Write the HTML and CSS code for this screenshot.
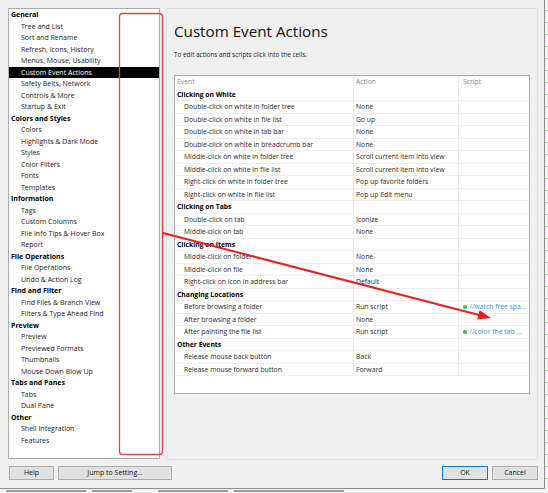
FILE: index.html
```html
<!DOCTYPE html>
<html>
<head>
<meta charset="utf-8">
<link rel="stylesheet" href="styles.css">
</head>
<body>
<div class="screen">
  <div class="top">
    <div class="window">
      <div class="main">
        <div class="tree">
          <div class="node grp">General</div>
          <div class="node">Tree and List</div>
          <div class="node">Sort and Rename</div>
          <div class="node">Refresh, Icons, History</div>
          <div class="node">Menus, Mouse, Usability</div>
          <div class="node sel">Custom Event Actions</div>
          <div class="node">Safety Belts, Network</div>
          <div class="node">Controls &amp; More</div>
          <div class="node">Startup &amp; Exit</div>
          <div class="node grp">Colors and Styles</div>
          <div class="node">Colors</div>
          <div class="node">Highlights &amp; Dark Mode</div>
          <div class="node">Styles</div>
          <div class="node">Color Filters</div>
          <div class="node">Fonts</div>
          <div class="node">Templates</div>
          <div class="node grp">Information</div>
          <div class="node">Tags</div>
          <div class="node">Custom Columns</div>
          <div class="node">File Info Tips &amp; Hover Box</div>
          <div class="node">Report</div>
          <div class="node grp">File Operations</div>
          <div class="node">File Operations</div>
          <div class="node">Undo &amp; Action Log</div>
          <div class="node grp">Find and Filter</div>
          <div class="node">Find Files &amp; Branch View</div>
          <div class="node">Filters &amp; Type Ahead Find</div>
          <div class="node grp">Preview</div>
          <div class="node">Preview</div>
          <div class="node">Previewed Formats</div>
          <div class="node">Thumbnails</div>
          <div class="node">Mouse Down Blow Up</div>
          <div class="node grp">Tabs and Panes</div>
          <div class="node">Tabs</div>
          <div class="node">Dual Pane</div>
          <div class="node grp">Other</div>
          <div class="node">Shell Integration</div>
          <div class="node">Features</div>
        </div>
        <div class="page">
          <h1 class="title">Custom Event Actions</h1>
          <p class="hint">To edit actions and scripts click into the cells.</p>
          <div class="table">
            <div class="row head"><div class="c">Event</div><div class="c">Action</div><div class="c">Script</div></div>
            <div class="row grp"><div class="c">Clicking on White</div><div class="c"></div><div class="c"></div></div>
            <div class="row"><div class="c">Double-click on white in folder tree</div><div class="c">None</div><div class="c"></div></div>
            <div class="row"><div class="c">Double-click on white in file list</div><div class="c">Go up</div><div class="c"></div></div>
            <div class="row"><div class="c">Double-click on white in tab bar</div><div class="c">None</div><div class="c"></div></div>
            <div class="row"><div class="c">Double-click on white in breadcrumb bar</div><div class="c">None</div><div class="c"></div></div>
            <div class="row"><div class="c">Middle-click on white in folder tree</div><div class="c">Scroll current item into view</div><div class="c"></div></div>
            <div class="row"><div class="c">Middle-click on white in file list</div><div class="c">Scroll current item into view</div><div class="c"></div></div>
            <div class="row"><div class="c">Right-click on white in folder tree</div><div class="c">Pop up favorite folders</div><div class="c"></div></div>
            <div class="row"><div class="c">Right-click on white in file list</div><div class="c">Pop up Edit menu</div><div class="c"></div></div>
            <div class="row grp"><div class="c">Clicking on Tabs</div><div class="c"></div><div class="c"></div></div>
            <div class="row"><div class="c">Double-click on tab</div><div class="c">Iconize</div><div class="c"></div></div>
            <div class="row"><div class="c">Middle-click on tab</div><div class="c">None</div><div class="c"></div></div>
            <div class="row grp"><div class="c">Clicking on Items</div><div class="c"></div><div class="c"></div></div>
            <div class="row"><div class="c">Middle-click on folder</div><div class="c">None</div><div class="c"></div></div>
            <div class="row"><div class="c">Middle-click on file</div><div class="c">None</div><div class="c"></div></div>
            <div class="row"><div class="c">Right-click on icon in address bar</div><div class="c">Default</div><div class="c"></div></div>
            <div class="row grp"><div class="c">Changing Locations</div><div class="c"></div><div class="c"></div></div>
            <div class="row"><div class="c">Before browsing a folder</div><div class="c">Run script</div><div class="c script"><span class="dot"></span>//watch free spa…</div></div>
            <div class="row"><div class="c">After browsing a folder</div><div class="c">None</div><div class="c"></div></div>
            <div class="row"><div class="c">After painting the file list</div><div class="c">Run script</div><div class="c script"><span class="dot"></span>//color the tab …</div></div>
            <div class="row grp"><div class="c">Other Events</div><div class="c"></div><div class="c"></div></div>
            <div class="row"><div class="c">Release mouse back button</div><div class="c">Back</div><div class="c"></div></div>
            <div class="row"><div class="c">Release mouse forward button</div><div class="c">Forward</div><div class="c"></div></div>
          </div>
        </div>
      </div>
      <div class="buttons">
        <div class="btn help">Help</div>
        <div class="btn jump">Jump to Setting...</div>
        <div class="spacer"></div>
        <div class="btn ok">OK</div>
        <div class="btn cancel">Cancel</div>
      </div>
    </div>
    <div class="edge-right"></div>
  </div>
  <div class="edge-bottom">
    <span class="mark m1"></span>
    <span class="mark m2"></span>
    <span class="mark m3"></span>
    <span class="mark m4"></span>
  </div>
  <svg class="annot" width="548" height="493" viewBox="0 0 548 493">
    <rect x="119.5" y="13.5" width="43" height="441" rx="3" ry="3" fill="none" stroke="#e8403f" stroke-width="1.3"/>
    <line x1="163" y1="233" x2="479" y2="315" stroke="#e8211f" stroke-width="2"/>
    <polygon points="491,318 477.2,319.4 479.6,310.2" fill="#e8211f"/>
  </svg>
</div>
</body>
</html>
```
FILE: styles.css
```css
* { box-sizing: border-box; }
html, body { margin: 0; padding: 0; }
body {
  width: 548px;
  height: 493px;
  overflow: hidden;
  background: #f0f0f0;
  font-family: "Open Sans", "Noto Sans", sans-serif;
  color: #1a1a1a;
}
.screen { position: relative; width: 548px; height: 493px; }
.top { display: flex; height: 489px; }
.window {
  width: 545px;
  height: 489px;
  background: #f0f0f0;
  border-right: 1px solid #8a8a8a;
  border-bottom: 1px solid #8a8a8a;
  padding: 8px 6px 0 8px;
  display: flex;
  flex-direction: column;
}
.edge-right {
  flex: 1;
  background: repeating-linear-gradient(to bottom, #f4f4f4 0 10px, #b9d4b5 10px 11px, #f4f4f4 11px 12px);
}
.main { display: flex; gap: 6px; height: 452px; }
.tree {
  width: 152px;
  height: 451px;
  background: #fff;
  border: 1px solid #acacac;
  padding-top: 0.25px;
}
.node {
  height: 11.5px;
  line-height: 11.5px;
  font-size: 7px;
  color: #1a1a1a;
  padding-left: 12px;
  white-space: nowrap;
}
.node.grp { font-weight: 700; color: #000; padding-left: 2px; }
.node.sel { background: #000; color: #fff; }
.page {
  flex: 1;
  border: 1px solid #e2e2e2;
  padding: 0 7px 0 7px;
}
.title {
  margin: 12px 0 0 0;
  font-size: 15.2px;
  font-weight: 400;
  line-height: 20px;
  color: #111;
}
.hint {
  margin: 9px 0 0 0;
  font-size: 6.4px;
  line-height: 10px;
  color: #1a1a1a;
}
.table {
  margin-top: 15px;
  width: 356px;
  height: 319px;
  background: #fff;
  border: 1px solid #a9a9a9;
}
.row {
  display: grid;
  grid-template-columns: 179px 105px 1fr;
  height: 12.5px;
}
.c {
  font-size: 6.8px;
  line-height: 11.5px;
  height: 12.5px;
  border-right: 1px solid #e9e9e9;
  border-bottom: 1px solid #eeeeee;
  padding-left: 2px;
  white-space: nowrap;
  overflow: hidden;
  color: #2a2a2a;
}
.c:first-child { padding-left: 9px; }
.c:last-child { border-right: none; padding-left: 4px; }
.row.grp .c:first-child { font-weight: 700; color: #000; padding-left: 2px; }
.row.head .c { color: #8a8a8a; border-bottom: none; }
.row.head .c:first-child { padding-left: 2px; }
.row.grp .c { border-bottom-color: #f2f2f2; }
.script { color: #3a8ee6; display: flex; align-items: center; gap: 3px; }
.dot { width: 3.5px; height: 3.5px; border-radius: 50%; background: #3fbf4f; flex: none; }
.buttons {
  display: flex;
  gap: 4px;
  margin-top: 6px;
  height: 14px;
  padding-left: 1px;
}
.btn {
  height: 14px;
  background: #e1e1e1;
  border: 1px solid #adadad;
  font-size: 7px;
  line-height: 12px;
  text-align: center;
  color: #111;
}
.help { width: 45px; }
.jump { width: 114px; }
.spacer { flex: 1; }
.ok { width: 46px; border-color: #0078d7; }
.cancel { width: 46px; }
.edge-bottom {
  height: 4px;
  background: #f4f4f4;
  position: relative;
  display: flex;
  align-items: flex-start;
  gap: 6px;
  padding: 1px 0 0 6px;
}
.mark { height: 1.5px; background: #9a9a9a; display: block; }
.m1 { width: 80px; }
.m2 { width: 40px; }
.m3 { width: 70px; margin-left: 20px; }
.m4 { width: 110px; }
.annot { position: absolute; left: 0; top: 0; pointer-events: none; }
```
